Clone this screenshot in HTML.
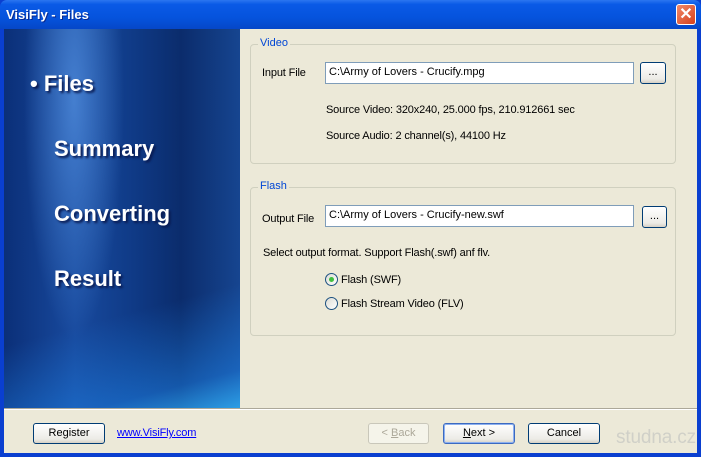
<!DOCTYPE html>
<html><head><style>
*{margin:0;padding:0;box-sizing:border-box}
body{width:701px;height:457px;overflow:hidden;font-family:"Liberation Sans",Tahoma,sans-serif;font-size:11px;background:#0a3fd0;position:relative}
.title{position:absolute;left:0;top:0;width:701px;height:29px;background:linear-gradient(#2b76f0 0%,#0a5ae6 15%,#0553dd 60%,#0547c8 100%);border-radius:7px 7px 0 0}
.title span{position:absolute;left:6px;top:7px;color:#fff;font-weight:bold;font-size:13px;text-shadow:1px 1px #0a2a90}
.close{position:absolute;left:676px;top:4px;width:20px;height:21px;background:linear-gradient(135deg,#f08a6a,#d6401c);border:1px solid #fff;border-radius:3px;color:#fff;font-size:16px;font-weight:bold;text-align:center;line-height:19px}
.client{position:absolute;left:4px;top:29px;width:693px;height:424px;background:#ece9d8}
.side{position:absolute;left:0;top:0;width:236px;height:379px;background:radial-gradient(ellipse 50px 240px at 70px 70px,rgba(80,140,220,.8) 0%,rgba(30,80,170,0) 100%),linear-gradient(90deg,#0b2f78 0%,#184a9e 30%,#0f3a86 55%,#0b2c6c 75%,#164590 100%);overflow:hidden}
.side:after{content:"";position:absolute;left:0;top:250px;width:236px;height:129px;background:linear-gradient(165deg,rgba(0,0,0,0) 35%,rgba(30,130,230,.5) 80%,rgba(50,180,250,.8) 100%)}
.nav{position:absolute;color:#fff;font-weight:bold;font-size:22px;text-shadow:2px 2px 2px #0a1a50}
.grp{position:absolute;border:1px solid #d0d0bf;border-radius:4px}
.grp .lg{position:absolute;top:-8px;left:7px;background:#ece9d8;color:#0046d5;padding:0 2px}
.lbl{position:absolute;color:#000;letter-spacing:-0.15px}
.inp{position:absolute;background:#fff;border:1px solid #7f9db9;height:22px;padding:3px 3px}
.btn{position:absolute;border:1px solid #003c74;border-radius:3px;background:linear-gradient(#fff,#ecebe6 80%,#d6d0c5);text-align:center;line-height:19px;height:21px}
.radio{position:absolute;width:13px;height:13px;border:1px solid #1c5180;border-radius:50%;background:linear-gradient(135deg,#dcdcd5,#fff)}
</style></head><body>
<div class="title"><span>VisiFly - Files</span></div>
<div class="close">✕</div>
<div class="client">
 <div class="side">
  <div class="nav" style="left:26px;top:42px">• Files</div>
  <div class="nav" style="left:50px;top:107px">Summary</div>
  <div class="nav" style="left:50px;top:172px">Converting</div>
  <div class="nav" style="left:50px;top:237px">Result</div>
 </div>
 <div class="grp" style="left:246px;top:15px;width:426px;height:120px"><span class="lg">Video</span></div>
 <div class="lbl" style="left:258px;top:38px">Input File</div>
 <div class="inp" style="left:321px;top:33px;width:309px">C:\Army of Lovers - Crucify.mpg</div>
 <div class="btn" style="left:636px;top:33px;width:26px;height:22px">...</div>
 <div class="lbl" style="left:322px;top:75px">Source Video: 320x240, 25.000 fps, 210.912661 sec</div>
 <div class="lbl" style="left:322px;top:101px">Source Audio: 2 channel(s), 44100 Hz</div>
 <div class="grp" style="left:246px;top:158px;width:426px;height:149px"><span class="lg">Flash</span></div>
 <div class="lbl" style="left:258px;top:184px">Output File</div>
 <div class="inp" style="left:321px;top:176px;width:309px">C:\Army of Lovers - Crucify-new.swf</div>
 <div class="btn" style="left:638px;top:177px;width:25px;height:22px">...</div>
 <div class="lbl" style="left:259px;top:218px">Select output format. Support Flash(.swf) anf flv.</div>
 <div class="radio" style="left:321px;top:244px"><div style="position:absolute;left:3px;top:3px;width:5px;height:5px;border-radius:50%;background:#3fbf3f"></div></div>
 <div class="lbl" style="left:337px;top:245px">Flash (SWF)</div>
 <div class="radio" style="left:321px;top:268px"></div>
 <div class="lbl" style="left:337px;top:269px">Flash Stream Video (FLV)</div>
 <div style="position:absolute;left:0;top:379px;width:693px;border-top:1px solid #aca899;border-bottom:1px solid #fff"></div>
 <div class="btn" style="left:29px;top:394px;width:72px">Register</div>
 <div class="lbl" style="left:113px;top:398px;color:#00f;text-decoration:underline">www.VisiFly.com</div>
 <div class="btn" style="left:364px;top:394px;width:61px;border-color:#c9c7ba;color:#aca899;background:#f5f4ea">&lt; <u>B</u>ack</div>
 <div class="btn" style="left:439px;top:394px;width:72px;border-color:#3c6ac0;box-shadow:inset 0 0 0 1px #8cb0f0"><u>N</u>ext &gt;</div>
 <div class="btn" style="left:524px;top:394px;width:72px">Cancel</div>
 <div class="lbl" style="left:612px;top:398px;font-size:19px;color:#d0d0c8">studna.cz</div>
</div>
</body></html>
